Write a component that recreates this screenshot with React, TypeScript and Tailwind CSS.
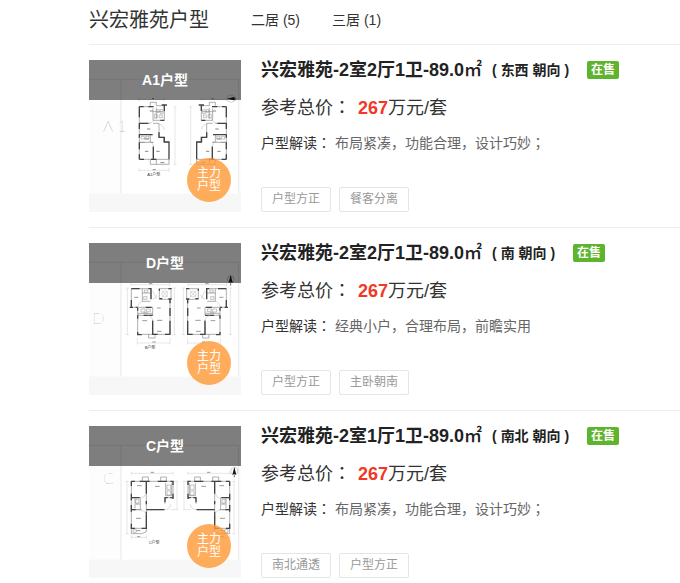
import type { ReactNode } from "react";

type Layout = {
  id: string;
  name: string;
  title: string;
  facing: string;
  price: number;
  summary: string;
  tags: string[];
  plan: ReactNode;
};

// Full-width colons and semicolons sit in the middle of their cell
function Centered({ text }: { text: string }) {
  return text.split(/([；：])/).map((part, i) =>
    /[；：]/.test(part) ? (
      <span key={i} lang="zh-TW" className="font-['Noto_Sans_CJK_TC',sans-serif]">
        {part}
      </span>
    ) : (
      part
    )
  );
}

function PlanSheet({ letter, letterX, letterY, caption, captionX, captionY, children }: {
  letter: string;
  letterX: number;
  letterY: number;
  caption: string;
  captionX: number;
  captionY: number;
  children: ReactNode;
}) {
  return (
    <svg viewBox="12 15 456 456" className="block h-full w-full" fill="none" aria-hidden="true">
      <rect x="12" y="15" width="456" height="456" fill="#fdfdfd" />
      <rect x="108" y="73" width="353" height="343" fill="#fff" />
      <path d="M12 73H461M108 73V416M461 73V416" stroke="#ddd" strokeWidth="2" />
      <rect x="12" y="416" width="456" height="55" fill="#f7f7f7" />
      <text x={letterX} y={letterY} fontSize="48" fontWeight="200" fill="#888" className="font-['Lato']">
        {letter}
      </text>
      <text x={captionX} y={captionY} fontSize="12" fill="#333">
        {caption}
      </text>
      {children}
    </svg>
  );
}

function PlanA() {
  const unit = (
    <>
      <path
        d="M162 134H238M162 129V139M238 129V139M270 155V328M265 155H275M265 328H275M162 346H252M162 338V350M252 338V350"
        stroke="#ccc"
        strokeWidth="1.5"
      />
      <path
        d="M163 155V313H196M163 155H200M196 152V142H214V152H238V196H204V160M214 158V192M204 170H236M163 205H196M204 205H222V226M196 240V262H205M163 262H180M205 272V313M222 226V247H236V261H252M252 313V328H196V313H252M214 313V328M163 262H205"
        stroke="#888"
        strokeWidth="2"
      />
      <path
        d="M163 155V187M163 204V222M163 238V248M163 262V283M163 298V313M205 275V313M252 261V313M163 155H176M190 155H206M163 205H190M163 239H203M222 232V247H238V261H254M163 313H177M198 313H214M230 150H246M238 150V168M226 196H238"
        stroke="#444"
        strokeWidth="4"
      />
      <path d="M191 205A18 18 0 0 0 208 188M222 208A16 16 0 0 1 237 224M205 272A17 17 0 0 0 190 259" stroke="#bbb" strokeWidth="1.5" />
      <path d="M216 164H223V172H216ZM226 164H234V176H226ZM208 178H217V188H208ZM222 180H232V188H222ZM168 244H178V252H168ZM182 244H192V250H182Z" stroke="#888" strokeWidth="1.5" />
      <path d="M194 168H204M186 222H196M178 252H192M180 289H190M214 289H224M226 323H238M201 131H207M203 344H212" stroke="#888" strokeWidth="3" />
    </>
  );
  return (
    <PlanSheet letter="A 1" letterX={54} letterY={230} caption="A1户型" captionX={187} captionY={364}>
      {unit}
      <g transform="translate(587 0) scale(-1 1)">{unit}</g>
      <circle cx="438" cy="131" r="11" stroke="#aaa" strokeWidth="1.5" />
      <path d="M426 131L448 126V136Z" fill="#111" />
      <path d="M450 128V136" stroke="#333" strokeWidth="3" />
    </PlanSheet>
  );
}

function PlanB() {
  const unit = (
    <>
      <path
        d="M138 140H254M138 135V146M254 135V146M127 150V290M122 150H132M122 290H132M268 150V290M263 150H273M263 290H273M157 315H255M157 300V320M255 300V320"
        stroke="#ccc"
        strokeWidth="1.5"
      />
      <path
        d="M139 152V208H158V289H255V184M139 152H198V183M172 152V190M172 165H198M158 208H203V232H160V226H203M203 245V289M223 152H258V184H223ZM191 289V300H210V289M172 190H196"
        stroke="#888"
        strokeWidth="2"
      />
      <path
        d="M139 152H164M139 186V208M134 208H144M152 208H158M158 210V218M158 232V242M158 282V290H170M198 152V184M190 152H200M182 208H200M176 232H203M203 248V289H218M255 184V196M255 210V234M255 248V289M240 289H257M223 152V158M250 152H260M223 182H232M250 183H260"
        stroke="#444"
        strokeWidth="4"
      />
      <circle cx="239" cy="168" r="9" stroke="#bbb" strokeWidth="1.5" />
      <path d="M230 158L249 178M249 158L230 178M203 184A17 17 0 0 0 216 170M203 158L214 182M158 208A18 18 0 0 1 175 190M203 245A18 18 0 0 0 188 232" stroke="#bbb" strokeWidth="1.5" />
      <path d="M178 156H188V163H178ZM176 176H186V184H176ZM168 213H180V222H168ZM184 213H196V221H184Z" stroke="#888" strokeWidth="1.5" />
      <path d="M148 178H160M216 210H227M216 247H232M172 248H186M176 225H188M216 280H230M192 137H202M202 312H212" stroke="#999" strokeWidth="3" />
    </>
  );
  return (
    <PlanSheet letter="D" letterX={22} letterY={259} caption="B户型" captionX={179} captionY={333}>
      {unit}
      <g transform="translate(563 0) scale(-1 1)">{unit}</g>
      <circle cx="437" cy="124" r="10" stroke="#888" strokeWidth="1.5" />
      <path d="M437 110L443 135L437 131L431 135Z" fill="#111" />
      <path d="M437 133V143" stroke="#333" strokeWidth="2" />
    </PlanSheet>
  );
}

function PlanC() {
  const unit = (
    <>
      <path
        d="M139 157H264M139 152V162M264 152V162M126 181V338M121 181H131M121 338H131M276 181V266M264 181H280M256 266H280M139 349H184M139 343V354M184 343V354"
        stroke="#ccc"
        strokeWidth="1.5"
      />
      <path
        d="M139 181H264V230H240V248M139 181V338H170L184 332V181M172 181V168H190V181M227 181V168H244V181M139 230H166V266H139M150 232V262M139 322H184M184 266H240M242 186V224H260V186M139 266H170"
        stroke="#888"
        strokeWidth="2"
      />
      <path
        d="M139 181V195M139 218V238M139 252V272M139 308V324M139 181H150M164 181H194M218 181H246M256 181H266M184 181V218M184 240V250M184 272V324M139 230H164M139 266H152M184 266H238M240 228V244M240 230H248M256 230H266M264 181V192M264 218V234M139 322H150M170 322H184"
        stroke="#444"
        strokeWidth="4"
      />
      <path d="M166 232A18 18 0 0 0 182 218M168 268A16 16 0 0 1 183 282M240 266A18 18 0 0 0 257 250" stroke="#bbb" strokeWidth="1.5" />
      <path d="M246 192H257V206H246ZM246 210H257V222H246ZM152 236H162V246H152ZM144 326H154V334H144Z" stroke="#888" strokeWidth="1.5" />
      <path d="M156 194H170M210 196H224M153 292H168M152 249H164M154 329H166M197 154H207M156 347H166" stroke="#999" strokeWidth="3" />
    </>
  );
  return (
    <PlanSheet letter="C" letterX={54} letterY={190} caption="C户型" captionX={191} captionY={368}>
      {unit}
      <g transform="translate(573 0) scale(-1 1)">{unit}</g>
      <circle cx="448" cy="150" r="11" stroke="#aaa" strokeWidth="1.5" />
      <path d="M448 138L454 162L448 158L442 162Z" fill="#111" />
      <path d="M448 160V169" stroke="#333" strokeWidth="2" />
    </PlanSheet>
  );
}

const tabs = [
  { label: "二居", count: 5 },
  { label: "三居", count: 1 },
];

const layouts: Layout[] = [
  {
    id: "a1",
    name: "A1户型",
    title: "兴宏雅苑-2室2厅1卫-89.0",
    facing: "东西 朝向",
    price: 267,
    summary: "布局紧凑，功能合理，设计巧妙；",
    tags: ["户型方正", "餐客分离"],
    plan: <PlanA />,
  },
  {
    id: "d",
    name: "D户型",
    title: "兴宏雅苑-2室2厅1卫-89.0",
    facing: "南 朝向",
    price: 267,
    summary: "经典小户，合理布局，前瞻实用",
    tags: ["户型方正", "主卧朝南"],
    plan: <PlanB />,
  },
  {
    id: "c",
    name: "C户型",
    title: "兴宏雅苑-2室1厅1卫-89.0",
    facing: "南北 朝向",
    price: 267,
    summary: "布局紧凑，功能合理，设计巧妙；",
    tags: ["南北通透", "户型方正"],
    plan: <PlanC />,
  },
];

function LayoutRow({ layout }: { layout: Layout }) {
  return (
    <li className="flex gap-5 border-t border-[#eee] py-[15px]">
      <a href={`#${layout.id}`} className="relative block size-[152px] shrink-0 overflow-hidden">
        {layout.plan}
        <span className="absolute inset-x-0 top-0 h-10 bg-black/50 text-center text-sm leading-10 font-bold text-white">
          {layout.name}
        </span>
        <span className="absolute right-[10px] bottom-[10px] flex size-11 items-center justify-center rounded-full bg-[#ff9933]/80 text-xs leading-[13px] text-white">
          <span className="w-6">主力户型</span>
        </span>
      </a>

      <div className="flex min-w-0 flex-1 flex-col">
        <h3 className="flex items-center text-lg leading-5 font-bold whitespace-nowrap text-[#222]">
          <a href={`#${layout.id}`}>
            {layout.title}
            <span className="font-medium">㎡</span>
          </a>
          <span className="ml-[10px] text-sm leading-5">( {layout.facing} )</span>
          <span className="ml-[18px] rounded-xs bg-[#5fb42e] px-1 text-xs leading-[18px] text-white">在售</span>
        </h3>
        <p className="mt-3 text-lg leading-7 text-[#333]">
          <Centered text="参考总价：" /> <strong className="ml-0.5 text-[#f33726]">{layout.price}</strong>万元/套
        </p>
        <p className="mt-[10px] text-sm leading-5 text-[#666]">
          <span className="text-[#333]">
            <Centered text="户型解读：" />
          </span>{" "}
          <Centered text={layout.summary} />
        </p>
        <ul className="mt-auto flex gap-2">
          {layout.tags.map((tag) => (
            <li key={tag} className="rounded-xs border border-[#e5e5e5] px-[10px] text-xs leading-[23px] text-[#999]">
              {tag}
            </li>
          ))}
        </ul>
      </div>
    </li>
  );
}

export default function App() {
  return (
    <main
      lang="zh-CN"
      className="bg-white pl-[89px] font-['Liberation_Sans','Noto_Sans_CJK_SC',sans-serif] text-[#333]"
    >
      <header className="flex h-11 items-center gap-[42px] pb-1">
        <h2 className="text-xl">兴宏雅苑户型</h2>
        <nav className="flex gap-8 text-sm">
          {tabs.map((tab) => (
            <a key={tab.label} href={`#${tab.label}`}>
              {tab.label} ({tab.count})
            </a>
          ))}
        </nav>
      </header>

      <ul>
        {layouts.map((layout) => (
          <LayoutRow key={layout.id} layout={layout} />
        ))}
      </ul>
    </main>
  );
}
